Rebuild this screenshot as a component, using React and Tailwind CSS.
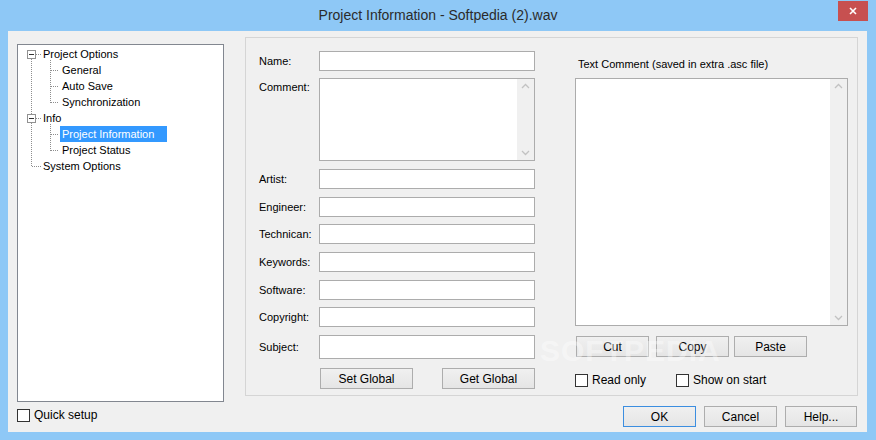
import React from "react";

const Btn = ({ children, className = "" }) => (
  <div
    className={
      "flex items-center justify-center h-[21px] border border-[#adadad] bg-linear-to-b from-[#f0f0f0] to-[#e5e5e5] text-[12px] text-black " +
      className
    }
  >
    {children}
  </div>
);

const Check = ({ label, className = "" }) => (
  <div className={"flex items-center " + className}>
    <div className="w-[13px] h-[13px] bg-white border border-[#333]" />
    <span className="ml-[4px] text-[12px] text-black">{label}</span>
  </div>
);

const Field = ({ label, className = "" }) => (
  <div className={"flex items-center " + className}>
    <span className="w-[60px] text-[11px] text-black">{label}</span>
    <div className="w-[216px] h-full bg-white border border-[#acacac]" />
  </div>
);

const ScrollBar = () => (
  <div className="w-[17px] h-full bg-[#f0f0f0] flex flex-col justify-between items-center py-[4px]">
    <svg width="9" height="6" viewBox="0 0 9 6">
      <polyline points="1,5 4.5,1.5 8,5" fill="none" stroke="#c2c2c2" strokeWidth="1.3" />
    </svg>
    <svg width="9" height="6" viewBox="0 0 9 6">
      <polyline points="1,1 4.5,4.5 8,1" fill="none" stroke="#c2c2c2" strokeWidth="1.3" />
    </svg>
  </div>
);

function Tree() {
  const dot = { stroke: "#8e8e8e", strokeDasharray: "1 1", fill: "none" };
  const rows = [
    { t: "Project Options", lvl: 0 },
    { t: "General", lvl: 1 },
    { t: "Auto Save", lvl: 1 },
    { t: "Synchronization", lvl: 1 },
    { t: "Info", lvl: 0 },
    { t: "Project Information", lvl: 1, sel: true },
    { t: "Project Status", lvl: 1 },
    { t: "System Options", lvl: 0 },
  ];
  return (
    <div className="relative w-[207px] h-[358px] bg-white border border-[#828790] pt-[1px]">
      <svg className="absolute left-0 top-0" width="205" height="130">
        {/* root line */}
        <line x1="13.5" y1="14" x2="13.5" y2="69" style={dot} />
        <line x1="13.5" y1="78" x2="13.5" y2="122" style={dot} />
        <line x1="14" y1="121.5" x2="23" y2="121.5" style={dot} />
        <line x1="18" y1="9.5" x2="23" y2="9.5" style={dot} />
        <line x1="18" y1="73.5" x2="23" y2="73.5" style={dot} />
        {/* children lines */}
        <line x1="32.5" y1="15" x2="32.5" y2="58" style={dot} />
        <line x1="33" y1="25.5" x2="40" y2="25.5" style={dot} />
        <line x1="33" y1="41.5" x2="40" y2="41.5" style={dot} />
        <line x1="33" y1="57.5" x2="40" y2="57.5" style={dot} />
        <line x1="32.5" y1="79" x2="32.5" y2="106" style={dot} />
        <line x1="33" y1="89.5" x2="40" y2="89.5" style={dot} />
        <line x1="33" y1="105.5" x2="40" y2="105.5" style={dot} />
        {/* boxes */}
        <rect x="9.5" y="5.5" width="8" height="8" fill="#fff" stroke="#919191" />
        <line x1="11" y1="9.5" x2="16" y2="9.5" stroke="#333" />
        <rect x="9.5" y="69.5" width="8" height="8" fill="#fff" stroke="#919191" />
        <line x1="11" y1="73.5" x2="16" y2="73.5" stroke="#333" />
      </svg>
      {rows.map((r) => (
        <div
          key={r.t}
          className={
            "relative h-[16px] flex items-center text-[11px] " +
            (r.lvl ? "pl-[42px]" : "pl-[23px]")
          }
        >
          <span
            className={
              "h-[16px] leading-[16px] px-[2px] " +
              (r.sel ? "w-[107px] bg-[#3399ff] text-white" : "text-black")
            }
          >
            {r.t}
          </span>
        </div>
      ))}
    </div>
  );
}

export default function App() {
  return (
    <div className="relative w-[876px] h-[440px] bg-[#8ec8f6] flex flex-col font-['Liberation_Sans',Arial,sans-serif] overflow-hidden">
      {/* title bar */}
      <div className="relative h-[31px] flex items-center justify-center">
        <span className="text-[14px] text-[#2b2b2b] -mt-[1px]">Project Information - Softpedia (2).wav</span>
        <div className="absolute right-[8px] top-[1px] w-[30px] h-[20px] bg-[#c75050] flex items-center justify-center">
          <svg width="8" height="8" viewBox="0 0 8 8">
            <path d="M1 1 L7 7 M7 1 L1 7" stroke="#fff" strokeWidth="1.6" />
          </svg>
        </div>
      </div>

      {/* client */}
      <div className="ml-[8px] w-[859px] h-[401px] bg-[#f0f0f0] flex">
        {/* left column */}
        <div className="ml-[9px] mt-[13px] flex flex-col">
          <Tree />
          <Check label="Quick setup" className="mt-[4px]" />
        </div>

        {/* right column */}
        <div className="ml-[21px] mt-[6px] flex flex-col">
          <div className="w-[613px] h-[359px] border border-[#d5d5d5] pl-[13px] pt-[13px] flex">
            {/* form */}
            <div className="w-[276px] flex flex-col">
              <Field label="Name:" className="h-[20px]" />
              <div className="flex items-start h-[83px] mt-[7px]">
                <span className="w-[60px] text-[11px] text-black mt-[1px]">Comment:</span>
                <div className="w-[216px] h-full bg-white border border-[#acacac] flex justify-end">
                  <ScrollBar />
                </div>
              </div>
              <Field label="Artist:" className="h-[20px] mt-[8px]" />
              <Field label="Engineer:" className="h-[20px] mt-[8px]" />
              <Field label="Technican:" className="h-[20px] mt-[7px]" />
              <Field label="Keywords:" className="h-[20px] mt-[8px]" />
              <Field label="Software:" className="h-[20px] mt-[8px]" />
              <Field label="Copyright:" className="h-[20px] mt-[7px]" />
              <Field label="Subject:" className="h-[24px] mt-[8px]" />
              <div className="flex justify-between pl-[61px] mt-[9px]">
                <Btn className="w-[93px]">Set Global</Btn>
                <Btn className="w-[93px]">Get Global</Btn>
              </div>
            </div>

            {/* text comment */}
            <div className="ml-[40px] w-[273px] flex flex-col">
              <span className="mt-[6px] h-[14px] leading-[14px] pl-[3px] text-[11px] text-black">
                Text Comment (saved in extra .asc file)
              </span>
              <div className="mt-[7px] h-[248px] bg-white border border-[#acacac] flex justify-end">
                <ScrollBar />
              </div>
              <div className="flex mt-[10px] pl-[1px]">
                <Btn className="w-[73px]">Cut</Btn>
                <Btn className="w-[73px] ml-[7px]">Copy</Btn>
                <Btn className="w-[73px] ml-[5px]">Paste</Btn>
              </div>
              <div className="flex mt-[14px]">
                <Check label="Read only" className="w-[101px]" />
                <Check label="Show on start" />
              </div>
            </div>
          </div>

          <div className="flex justify-end pr-[1px] mt-[10px]">
            <Btn className="w-[73px] !border-[#3c8ee0]">OK</Btn>
            <Btn className="w-[73px] ml-[8px]">Cancel</Btn>
            <Btn className="w-[72px] ml-[8px]">Help...</Btn>
          </div>
        </div>
      </div>

      {/* watermark */}
      <span className="absolute left-[540px] top-[328px] text-[30px] font-bold tracking-[1px] text-white/40 select-none pointer-events-none">
        SOFTPEDIA
      </span>
    </div>
  );
}
